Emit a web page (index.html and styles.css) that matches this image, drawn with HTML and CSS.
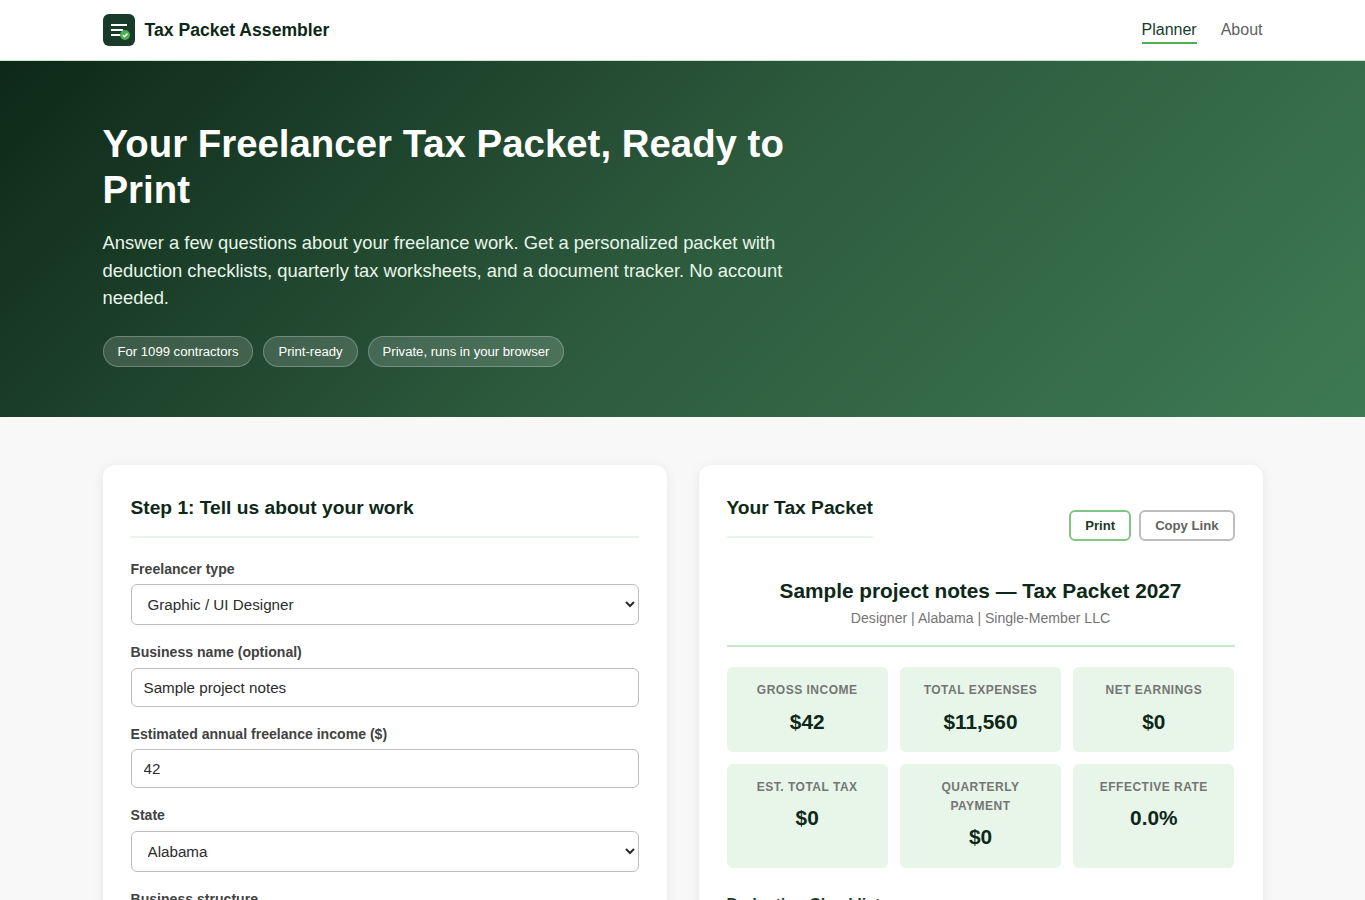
FILE: index.html
```html
<!DOCTYPE html>
<html lang="en">
<head>
    <meta charset="UTF-8">
    <meta name="viewport" content="width=device-width, initial-scale=1.0">
    <title>Tax Packet Assembler</title>
    <link rel="stylesheet" href="styles.css">
</head>
<body>
    <header class="site-header">
        <div class="container header-inner">
            <a href="#" class="logo">
                <svg width="32" height="32" viewBox="0 0 32 32" aria-hidden="true">
                    <rect width="32" height="32" rx="6" fill="#1a3a2a"/>
                    <path d="M8 11h16M8 16h12M8 21h14" stroke="#fff" stroke-width="2" fill="none"/>
                    <circle cx="22" cy="21" r="5" fill="#4caf50"/>
                    <path d="M19.8 21l1.7 1.7 3-3.2" stroke="#fff" stroke-width="1.5" fill="none"/>
                </svg>
                <span>Tax Packet Assembler</span>
            </a>
            <ul class="nav">
                <li><a href="#" class="active">Planner</a></li>
                <li><a href="#">About</a></li>
            </ul>
        </div>
    </header>

    <section class="hero">
        <div class="container">
            <div class="hero-text">
                <h1>Your Freelancer Tax Packet, Ready to Print</h1>
                <p>Answer a few questions about your freelance work. Get a personalized packet with deduction checklists, quarterly tax worksheets, and a document tracker. No account needed.</p>
                <div class="badges">
                    <span class="badge">For 1099 contractors</span>
                    <span class="badge">Print-ready</span>
                    <span class="badge">Private, runs in your browser</span>
                </div>
            </div>
        </div>
    </section>

    <main class="container planner">
        <section class="panel">
            <h2>Step 1: Tell us about your work</h2>
            <form id="plannerForm">
                <div class="form-group">
                    <label for="type">Freelancer type</label>
                    <select id="type"><option>Graphic / UI Designer</option></select>
                </div>
                <div class="form-group">
                    <label for="name">Business name (optional)</label>
                    <input type="text" id="name" value="Sample project notes">
                </div>
                <div class="form-group">
                    <label for="income">Estimated annual freelance income ($)</label>
                    <input type="number" id="income" value="42">
                </div>
                <div class="form-group">
                    <label for="state">State</label>
                    <select id="state"><option>Alabama</option></select>
                </div>
                <div class="form-group">
                    <label for="structure">Business structure</label>
                    <select id="structure"><option>Single-Member LLC</option></select>
                </div>
            </form>
        </section>

        <section class="panel">
            <div class="output-header">
                <h2>Your Tax Packet</h2>
                <div class="actions">
                    <button type="button" class="btn btn-print">Print</button>
                    <button type="button" class="btn">Copy Link</button>
                </div>
            </div>
            <div class="packet-title">
                <h3>Sample project notes — Tax Packet 2027</h3>
                <p>Designer | Alabama | Single-Member LLC</p>
            </div>
            <div class="summary">
                <div class="summary-card"><div class="label">Gross Income</div><div class="value">$42</div></div>
                <div class="summary-card"><div class="label">Total Expenses</div><div class="value">$11,560</div></div>
                <div class="summary-card"><div class="label">Net Earnings</div><div class="value">$0</div></div>
                <div class="summary-card"><div class="label">Est. Total Tax</div><div class="value">$0</div></div>
                <div class="summary-card"><div class="label">Quarterly Payment</div><div class="value">$0</div></div>
                <div class="summary-card"><div class="label">Effective Rate</div><div class="value">0.0%</div></div>
            </div>
            <h4 class="section-title">Deduction Checklist</h4>
        </section>
    </main>
</body>
</html>
```
FILE: styles.css
```css
* {
    box-sizing: border-box;
    margin: 0;
    padding: 0;
}

html {
    overflow: hidden;
}

body {
    font-family: "Liberation Sans", Arial, sans-serif;
    font-size: 16px;
    line-height: 1.6;
    color: #212121;
    background: #f8f8f8;
    height: 100vh;
    overflow: hidden;
}

.container {
    max-width: 1200px;
    margin: 0 auto;
    padding: 0 20px;
}

/* Header */
.site-header {
    background: #fff;
    border-bottom: 1px solid #c8e6c9;
}

.header-inner {
    display: flex;
    align-items: center;
    justify-content: space-between;
    height: 60px;
}

.logo {
    display: flex;
    align-items: center;
    gap: 10px;
    font-size: 17.6px;
    font-weight: 700;
    color: #0d2818;
    text-decoration: none;
}

.nav {
    display: flex;
    gap: 24px;
    list-style: none;
}

.nav a {
    color: #616161;
    text-decoration: none;
    padding-bottom: 4px;
    border-bottom: 2px solid transparent;
}

.nav a.active {
    color: #1a3a2a;
    border-bottom-color: #4caf50;
}

/* Hero */
.hero {
    padding: 60px 0 50px;
    color: #fff;
    background: linear-gradient(135deg, #0d2818 0%, #2d5a3d 50%, #3d7a54 100%);
}

.hero-text {
    max-width: 700px;
}

.hero h1 {
    font-size: 38.4px;
    line-height: 1.2;
    margin-bottom: 16px;
}

.hero p {
    font-size: 18.4px;
    line-height: 1.5;
    color: #e8f5e9;
    margin-bottom: 24px;
}

.badges {
    display: flex;
    gap: 10px;
}

.badge {
    padding: 4px 14px;
    font-size: 13.12px;
    background: rgba(255, 255, 255, 0.15);
    border: 1px solid rgba(255, 255, 255, 0.25);
    border-radius: 20px;
}

/* Planner */
.planner {
    display: grid;
    grid-template-columns: 1fr 1fr;
    gap: 32px;
    padding-top: 48px;
}

.panel {
    background: #fff;
    border-radius: 12px;
    padding: 28px;
    box-shadow: 0 2px 12px rgba(0, 0, 0, 0.08);
}

.panel h2 {
    font-size: 19.2px;
    color: #0d2818;
    padding-bottom: 12px;
    border-bottom: 2px solid #e8f5e9;
    margin-bottom: 20px;
}

.form-group {
    margin-bottom: 16px;
}

.form-group label {
    display: block;
    font-size: 14.08px;
    font-weight: 600;
    color: #424242;
    margin-bottom: 4px;
}

.form-group input,
.form-group select {
    display: block;
    width: 100%;
    padding: 10px 12px;
    font-family: inherit;
    font-size: 15.2px;
    color: #2c2c2c;
    background: #fff;
    border: 1px solid #bdbdbd;
    border-radius: 6px;
}

/* Packet */
.output-header {
    display: flex;
    align-items: center;
    justify-content: space-between;
    margin-bottom: 16px;
}

.actions {
    display: flex;
    gap: 8px;
}

.btn {
    padding: 6px 14px;
    font-family: inherit;
    font-size: 13.12px;
    font-weight: 600;
    color: #616161;
    background: #fff;
    border: 2px solid #bdbdbd;
    border-radius: 6px;
    cursor: pointer;
}

.btn-print {
    color: #1a3a2a;
    border-color: #81c784;
}

.packet-title {
    text-align: center;
    padding-bottom: 16px;
    border-bottom: 2px solid #c8e6c9;
    margin-bottom: 20px;
}

.packet-title h3 {
    font-size: 20.8px;
    color: #0d2818;
}

.packet-title p {
    font-size: 14.08px;
    color: #757575;
}

.summary {
    display: grid;
    grid-template-columns: repeat(3, 1fr);
    gap: 12px;
    margin-bottom: 24px;
}

.summary-card {
    padding: 14px;
    text-align: center;
    background: #e8f5e9;
    border-radius: 6px;
}

.label {
    font-size: 12px;
    font-weight: 600;
    letter-spacing: 0.5px;
    text-transform: uppercase;
    color: #757575;
    margin-bottom: 4px;
}

.value {
    font-size: 20.8px;
    font-weight: 700;
    color: #0d2818;
}

.section-title {
    font-size: 16px;
    color: #1a3a2a;
}
```
